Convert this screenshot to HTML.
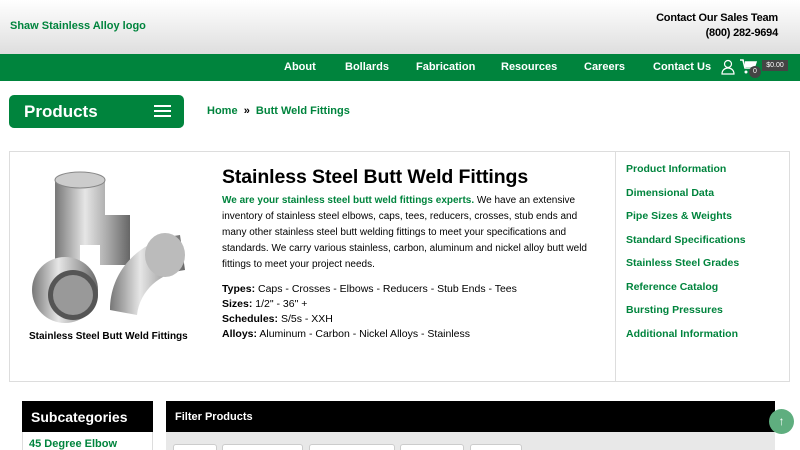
<!DOCTYPE html>
<html><head><meta charset="utf-8"><style>
*{margin:0;padding:0;box-sizing:border-box}
html,body{width:800px;height:450px;overflow:hidden}
body{font-family:"Liberation Sans",Arial,sans-serif;background:#fff;position:relative}
.a{position:absolute}
.g{color:#00843d;font-weight:bold}
</style></head><body>
<div class="a" style="left:0;top:0;width:800px;height:54px;background:linear-gradient(#fff,#dedede)"></div>
<div class="a g" style="left:10px;top:20px;font-size:11px">Shaw Stainless Alloy logo</div>
<div class="a" style="right:22px;top:11px;font-size:11px;font-weight:bold;text-align:right;line-height:15px;letter-spacing:-0.2px">Contact Our Sales Team<br>(800) 282-9694</div>
<div class="a" style="left:0;top:54px;width:800px;height:27px;background:#00843d"></div>
<div class="a" style="top:61px;left:0;width:800px;font-size:11px;font-weight:bold;color:#fff">
<span class="a" style="left:284px">About</span><span class="a" style="left:345px">Bollards</span><span class="a" style="left:416px">Fabrication</span><span class="a" style="left:501px">Resources</span><span class="a" style="left:584px">Careers</span><span class="a" style="left:653px">Contact Us</span></div>
<svg class="a" style="left:720px;top:59px" width="16" height="16" viewBox="0 0 16 16" fill="none" stroke="#fff" stroke-width="1.2"><circle cx="8" cy="5" r="3.5"/><path d="M2 15c0-4 3-6 6-6s6 2 6 6z"/></svg>
<svg class="a" style="left:740px;top:59px" width="18" height="16" viewBox="0 0 18 16" fill="#fff"><path d="M0 1h3l2 8h9l2-6H5" stroke="#fff" stroke-width="1.6" fill="none"/><rect x="5" y="3" width="10" height="5"/><circle cx="6" cy="13" r="1.5"/></svg>
<div class="a" style="left:749px;top:66px;width:12px;height:12px;border-radius:6px;background:#444;color:#fff;font-size:7px;text-align:center;line-height:12px">0</div>
<div class="a" style="left:762px;top:60px;width:26px;height:11px;background:#444;color:#fff;font-size:7px;text-align:center;line-height:11px">$0.00</div>
<div class="a" style="left:9px;top:95px;width:175px;height:33px;background:#00843d;border-radius:5px"></div>
<div class="a" style="left:24px;top:102px;font-size:17px;font-weight:bold;color:#fff">Products</div>
<div class="a" style="left:154px;top:105px;width:17px;height:2px;background:#fff;box-shadow:0 5px #fff,0 10px #fff"></div>
<div class="a g" style="left:207px;top:105px;font-size:11px">Home &nbsp;<span style="color:#000">»</span>&nbsp; Butt Weld Fittings</div>
<div class="a" style="left:9px;top:151px;width:781px;height:231px;border:1px solid #ddd"></div>
<div class="a" style="left:615px;top:151px;width:1px;height:231px;background:#ddd"></div>
<svg class="a" style="left:25px;top:165px" width="165" height="160" viewBox="0 0 165 160">
<defs><linearGradient id="m" x1="0" x2="1"><stop offset="0" stop-color="#777"/><stop offset=".4" stop-color="#e6e6e6"/><stop offset=".7" stop-color="#aaa"/><stop offset="1" stop-color="#666"/></linearGradient></defs>
<path d="M30 15h50v35h25v50H75v-20H55v20H30z" fill="url(#m)"/><ellipse cx="55" cy="15" rx="25" ry="8" fill="#ccc" stroke="#888"/>
<path d="M85 145c0-40 30-70 70-75l5 35c-25 3-45 20-48 45z" fill="url(#m)"/>
<ellipse cx="140" cy="90" rx="20" ry="22" fill="#bbb"/>
<circle cx="40" cy="125" r="33" fill="url(#m)"/><circle cx="48" cy="130" r="25" fill="#555"/><circle cx="48" cy="130" r="20" fill="#999"/>
</svg>
<div class="a" style="left:29px;top:331px;font-size:10px;font-weight:bold">Stainless Steel Butt Weld Fittings</div>
<div class="a" style="left:222px;top:166px;font-size:19.5px;font-weight:bold;letter-spacing:-0.1px">Stainless Steel Butt Weld Fittings</div>
<div class="a" style="left:222px;top:193px;width:365px;font-size:10px;line-height:16px"><b style="color:#00843d">We are your stainless steel butt weld fittings experts.</b> We have an extensive inventory of stainless steel elbows, caps, tees, reducers, crosses, stub ends and many other stainless steel butt welding fittings to meet your specifications and standards. We carry various stainless, carbon, aluminum and nickel alloy butt weld fittings to meet your project needs.</div>
<div class="a" style="left:222px;top:282px;font-size:10.5px;line-height:15px"><b>Types:</b> Caps - Crosses - Elbows - Reducers - Stub Ends - Tees<br><b>Sizes:</b> 1/2" - 36" +<br><b>Schedules:</b> S/5s - XXH<br><b>Alloys:</b> Aluminum - Carbon - Nickel Alloys - Stainless</div>
<div class="a g" style="left:626px;top:158px;font-size:10.5px;line-height:23.5px">Product Information<br>Dimensional Data<br>Pipe Sizes &amp; Weights<br>Standard Specifications<br>Stainless Steel Grades<br>Reference Catalog<br>Bursting Pressures<br>Additional Information</div>
<div class="a" style="left:22px;top:401px;width:131px;height:60px;border:1px solid #ddd"></div>
<div class="a" style="left:22px;top:401px;width:131px;height:31px;background:#000;color:#fff;font-size:14px;font-weight:bold;padding:8px 0 0 9px">Subcategories</div>
<div class="a g" style="left:29px;top:438px;font-size:11px">45 Degree Elbow</div>
<div class="a" style="left:166px;top:401px;width:609px;height:31px;background:#000;color:#fff;font-size:11px;font-weight:bold;padding:10px 0 0 9px">Filter Products</div>
<div class="a" style="left:166px;top:432px;width:609px;height:20px;background:#e8e8e8"></div>
<div class="a" style="top:444px;left:0;height:10px">
<span class="a" style="left:173px;width:44px;height:10px;background:#fff;border:1px solid #ccc;border-radius:3px"></span>
<span class="a" style="left:222px;width:81px;height:10px;background:#fff;border:1px solid #ccc;border-radius:3px"></span>
<span class="a" style="left:309px;width:86px;height:10px;background:#fff;border:1px solid #ccc;border-radius:3px"></span>
<span class="a" style="left:400px;width:64px;height:10px;background:#fff;border:1px solid #ccc;border-radius:3px"></span>
<span class="a" style="left:470px;width:52px;height:10px;background:#fff;border:1px solid #ccc;border-radius:3px"></span></div>
<div class="a" style="left:769px;top:409px;width:25px;height:25px;border-radius:13px;background:#5fae7f;color:#fff;font-size:12px;text-align:center;line-height:25px">↑</div>
</body></html>
